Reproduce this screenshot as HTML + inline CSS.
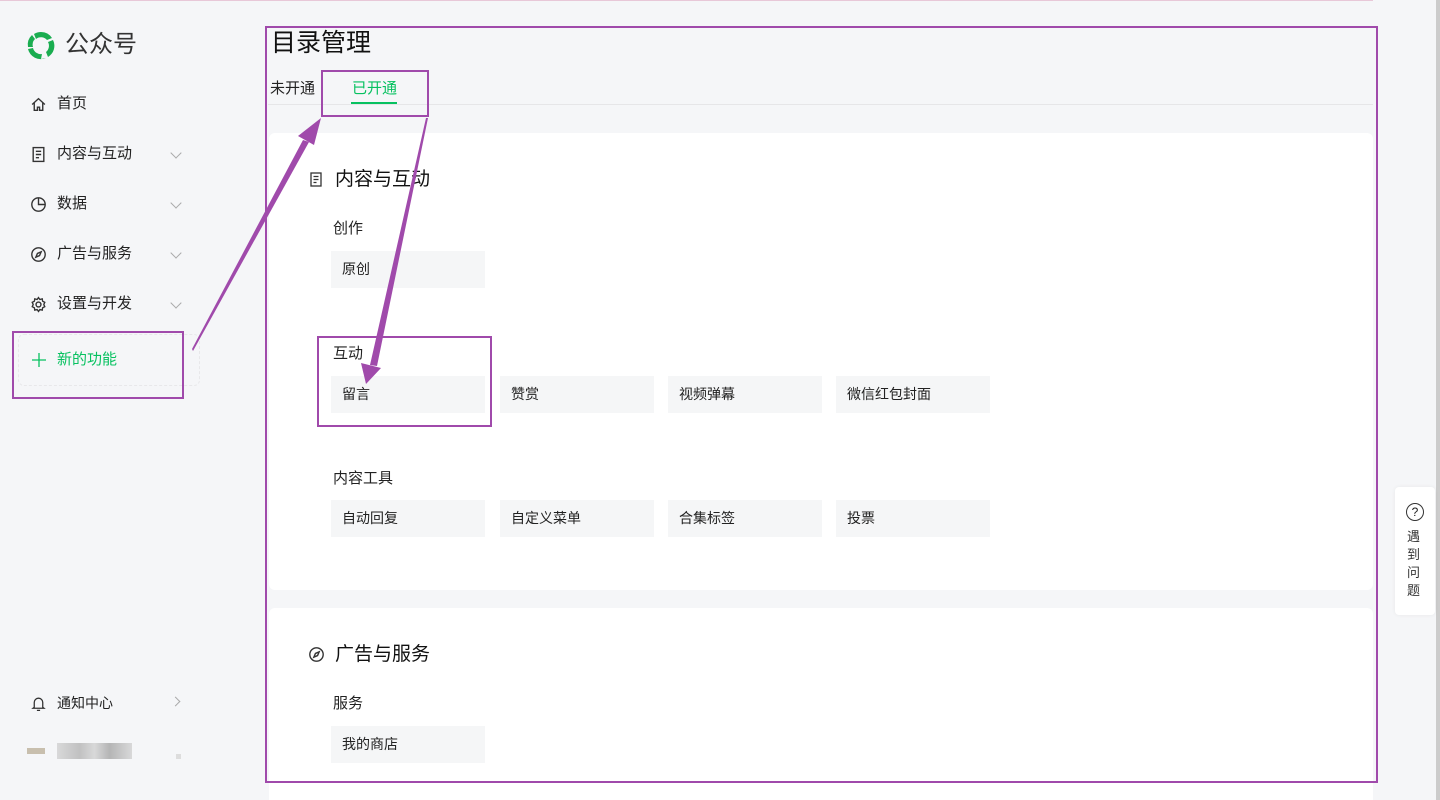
<!DOCTYPE html>
<html><head><meta charset="utf-8"><style>
*{margin:0;padding:0;box-sizing:border-box}
html,body{width:1440px;height:800px;overflow:hidden}
body{background:#f5f6f8;font-family:"Liberation Sans","Noto Sans CJK SC",sans-serif;color:#1a1a1a;position:relative}
.abs{position:absolute}
.nav{position:absolute;left:30px;font-size:15px;color:#222;display:flex;align-items:center;line-height:20px}
.nav svg{margin-right:10px}
.chev{position:absolute;left:172px;width:8px;height:8px;border-right:1.2px solid #aaa;border-bottom:1.2px solid #aaa;transform:rotate(45deg)}
.card{position:absolute;background:#fff;border-radius:6px;left:269px;width:1104px}
.tile{position:absolute;width:154px;height:37px;background:#f5f6f7;font-size:14px;line-height:37px;padding-left:11px;color:#222}
.lab{position:absolute;font-size:15px;color:#222;line-height:20px}
.box{position:absolute;border:2.5px solid #a04aab}
</style></head><body>
<div class="abs" style="left:0;top:0;width:1440px;height:1px;background:#e8c8d8"></div>
<div class="abs" style="left:1436px;top:0;width:4px;height:800px;background:#ccc"></div>
<div class="abs" style="left:1373px;top:0;width:63px;height:800px;background:#f5f6f8"></div>
<svg class="abs" style="left:25px;top:29px" width="32" height="32" viewBox="0 0 32 32">
<path d="M16 3a13 13 0 0 1 11 6l-5 2a8 8 0 0 0-11-1l-2-5A13 13 0 0 1 16 3z" fill="#1aad50"/>
<path d="M28 11a13 13 0 0 1-5 17l-2-5a8 8 0 0 0 2-10z" fill="#1aad50"/>
<path d="M21 29a13 13 0 0 1-18-9l5-1a8 8 0 0 0 9 6l-1 5z" fill="#1aad50"/>
<path d="M3 18a13 13 0 0 1 4-12l3 4a8 8 0 0 0-2 8z" fill="#1aad50"/>
</svg>
<div class="abs" style="left:65px;top:30px;font-size:24px;color:#333;line-height:30px">公众号</div>
<div class="nav" style="top:94px"><svg width="17" height="17" viewBox="0 0 16 16" fill="none" stroke="#333" stroke-width="1.3"><path d="M2 8L8 2.5 14 8M4 6.5V13.5h3v-3h2v3h3V6.5"/></svg>首页</div>
<div class="nav" style="top:144px"><svg width="17" height="17" viewBox="0 0 16 16" fill="none" stroke="#333" stroke-width="1.3"><rect x="3" y="1.5" width="10" height="13"/><path d="M5.5 5h5M5.5 8h5M5.5 11h3"/></svg>内容与互动</div><div class="chev" style="top:149px"></div>
<div class="nav" style="top:194px"><svg width="17" height="17" viewBox="0 0 16 16" fill="none" stroke="#333" stroke-width="1.3"><circle cx="8" cy="8" r="6.3"/><path d="M8 1.7V8h6.3"/></svg>数据</div><div class="chev" style="top:199px"></div>
<div class="nav" style="top:244px"><svg width="17" height="17" viewBox="0 0 16 16" fill="none" stroke="#333" stroke-width="1.3"><circle cx="8" cy="8" r="6.3"/><path d="M10.5 5.5L9 9 5.5 10.5 7 7z"/></svg>广告与服务</div><div class="chev" style="top:249px"></div>
<div class="nav" style="top:294px"><svg width="17" height="17" viewBox="0 0 16 16" fill="none" stroke="#333" stroke-width="1.3"><circle cx="8" cy="8" r="2.3"/><path d="M8 1.5l1.3 1.8 2.2-.6.4 2.2 2 1-.9 2.1.9 2.1-2 1-.4 2.2-2.2-.6L8 14.5l-1.3-1.8-2.2.6-.4-2.2-2-1 .9-2.1-.9-2.1 2-1 .4-2.2 2.2.6z"/></svg>设置与开发</div><div class="chev" style="top:299px"></div>
<div class="abs" style="left:18px;top:334px;width:182px;height:52px;border:1px dashed #e8e8ea;border-radius:6px"></div>
<svg class="abs" style="left:31px;top:352px" width="16" height="16" viewBox="0 0 16 16" stroke="#07c160" stroke-width="1.3"><path d="M8 1v14M1 8h14"/></svg>
<div class="abs" style="left:57px;top:350px;font-size:15px;color:#07c160;line-height:20px">新的功能</div>
<div class="nav" style="top:693px;font-size:14px"><svg width="17" height="17" viewBox="0 0 16 16" fill="none" stroke="#333" stroke-width="1.2"><path d="M4 11.5V7a4 4 0 0 1 8 0v4.5l1.2 1H2.8zM6.5 14.5h3"/></svg>通知中心</div>
<div class="abs" style="left:172px;top:698px;width:7px;height:7px;border-right:1.2px solid #aaa;border-top:1.2px solid #aaa;transform:rotate(45deg)"></div>
<div class="abs" style="left:27px;top:748px;width:18px;height:6px;background:#c8bfae"></div>
<div class="abs" style="left:57px;top:743px;width:75px;height:16px;background:linear-gradient(90deg,#ccc,#aaa 30%,#ccc 50%,#999 70%,#ccc);opacity:.7"></div>
<div class="abs" style="left:176px;top:754px;width:5px;height:5px;background:#ddd"></div>
<div class="abs" style="left:271px;top:28px;font-size:25px;color:#111;line-height:30px">目录管理</div>
<div class="abs" style="left:270px;top:80px;font-size:15px;color:#222;line-height:18px">未开通</div>
<div class="abs" style="left:352px;top:80px;font-size:15px;color:#07c160;line-height:18px">已开通</div>
<div class="abs" style="left:351px;top:102px;width:46px;height:2px;background:#07c160"></div>
<div class="abs" style="left:268px;top:104px;width:1105px;height:1px;background:#e6e6e8"></div>
<div class="card" style="top:133px;height:457px"></div>
<div class="card" style="top:608px;height:200px"></div>
<svg class="abs" style="left:308px;top:171px" width="16" height="17" viewBox="0 0 16 16" fill="none" stroke="#333" stroke-width="1.3"><rect x="3" y="1.5" width="10" height="13"/><path d="M5.5 5h5M5.5 8h5M5.5 11h3"/></svg>
<div class="abs" style="left:335px;top:168px;font-size:19px;color:#111;line-height:24px">内容与互动</div>
<div class="lab" style="left:333px;top:219px">创作</div>
<div class="tile" style="left:331px;top:251px">原创</div>
<div class="lab" style="left:333px;top:344px">互动</div>
<div class="tile" style="left:331px;top:376px">留言</div>
<div class="tile" style="left:500px;top:376px">赞赏</div>
<div class="tile" style="left:668px;top:376px">视频弹幕</div>
<div class="tile" style="left:836px;top:376px">微信红包封面</div>
<div class="lab" style="left:333px;top:469px">内容工具</div>
<div class="tile" style="left:331px;top:500px">自动回复</div>
<div class="tile" style="left:500px;top:500px">自定义菜单</div>
<div class="tile" style="left:668px;top:500px">合集标签</div>
<div class="tile" style="left:836px;top:500px">投票</div>
<svg class="abs" style="left:308px;top:646px" width="17" height="17" viewBox="0 0 16 16" fill="none" stroke="#333" stroke-width="1.3"><circle cx="8" cy="8" r="6.3"/><path d="M10.5 5.5L9 9 5.5 10.5 7 7z"/></svg>
<div class="abs" style="left:335px;top:643px;font-size:19px;color:#111;line-height:24px">广告与服务</div>
<div class="lab" style="left:333px;top:694px">服务</div>
<div class="tile" style="left:331px;top:726px">我的商店</div>
<div class="abs" style="left:1395px;top:487px;width:40px;height:128px;background:#fff;border-radius:4px;box-shadow:0 0 4px rgba(0,0,0,.06)"></div>
<div class="abs" style="left:1406px;top:503px;width:18px;height:18px;border:1px solid #333;border-radius:50%;font-size:12px;text-align:center;line-height:16px">?</div>
<div class="abs" style="left:1407px;top:528px;width:16px;font-size:13px;line-height:18px;color:#333">遇到问题</div>
<div class="box" style="left:265px;top:26px;width:1113px;height:757px"></div>
<div class="box" style="left:321px;top:70px;width:108px;height:47px"></div>
<div class="box" style="left:12px;top:331px;width:172px;height:68px"></div>
<div class="box" style="left:317px;top:336px;width:175px;height:91px"></div>
<svg class="abs" style="left:0;top:0" width="1440" height="800">
<polygon points="192,349 193,351 309,142 303,140" fill="#a04aab"/>
<polygon points="321,118 298,136 314,145" fill="#a04aab"/>
<polygon points="428,118 426,118 370,365 377,366" fill="#a04aab"/>
<polygon points="366,384 361,363 381,368" fill="#a04aab"/>
</svg>
</body></html>
